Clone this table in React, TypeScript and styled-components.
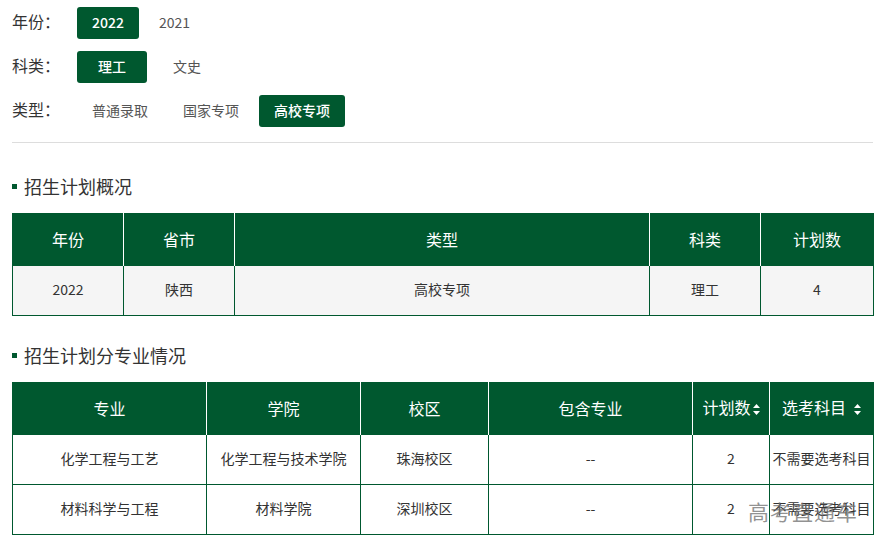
import React from "react";
import styled, { createGlobalStyle } from "styled-components";

const GREEN = "#00582f";

const Global = createGlobalStyle`
  html, body { margin: 0; padding: 0; background: #fff; }
  body { font-family: "Microsoft YaHei", "Noto Sans CJK SC", "Noto Sans", sans-serif; color: #333; }
  * { box-sizing: border-box; }
`;

const Page = styled.div`
  position: relative;
  padding: 7px 13px 0 12px;
  width: 886px;
`;

const Filters = styled.div`
  display: flex;
  flex-direction: column;
  gap: 12px;
`;

const FilterRow = styled.div`
  display: flex;
  align-items: center;
  height: 32px;
`;

const Label = styled.div`
  width: 65px;
  font-size: 16px;
  color: #333;
  line-height: 32px;
  margin-top: -4px;
`;

const Option = styled.button<{ $active?: boolean; $min?: number }>`
  height: 32px;
  padding: 0 15px 2px;
  min-width: ${(p) => (p.$min ? `${p.$min}px` : "0")};
  margin-right: 5px;
  border: none;
  border-radius: 3px;
  font-family: inherit;
  font-size: 14px;
  font-weight: ${(p) => (p.$active ? 500 : 400)};
  background: ${(p) => (p.$active ? GREEN : "transparent")};
  color: ${(p) => (p.$active ? "#fff" : "#555")};
  cursor: pointer;
`;

const Divider = styled.hr`
  border: none;
  border-top: 1px solid #ddd;
  margin: 15px 0 0;
`;

const SectionTitle = styled.h3<{ $top: number }>`
  display: flex;
  align-items: center;
  gap: 7px;
  margin: ${(p) => p.$top}px 0 14px;
  height: 24px;
  padding-bottom: 3px;
  font-size: 18px;
  font-weight: 400;
  color: #333;
  &::before {
    content: "";
    width: 5px;
    height: 5px;
    margin-top: 2px;
    background: ${GREEN};
  }
`;

const Table = styled.table`
  width: 861px;
  border-collapse: collapse;
  table-layout: fixed;
  border: 1px solid ${GREEN};
`;

const Th = styled.th`
  height: 52px;
  background: ${GREEN};
  color: #fff;
  font-size: 16px;
  font-weight: 400;
  text-align: center;
  padding: 0 0 2px;
  border-left: 1px solid #fff;
  white-space: nowrap;
  &:first-child { border-left: 1px solid ${GREEN}; }
`;

const Td = styled.td<{ $bg?: string }>`
  height: 50px;
  background: ${(p) => p.$bg || "#fff"};
  border: 1px solid ${GREEN};
  font-size: 14px;
  text-align: center;
  padding: 0 0 3px;
  color: #333;
  white-space: nowrap;
  overflow: hidden;
`;

const SortWrap = styled.span<{ $gap?: number }>`
  display: inline-block;
  vertical-align: middle;
  margin-left: ${(p) => p.$gap ?? 2}px;
  margin-top: -3px;
`;

const Watermark = styled.div`
  position: absolute;
  left: 748px;
  top: 496px;
  font-size: 21px;
  letter-spacing: 1px;
  color: rgba(110, 110, 110, 0.75);
  pointer-events: none;
`;

const Sort = ({ gap }: { gap?: number }) => (
  <SortWrap $gap={gap}>
    <svg width="7" height="11" viewBox="0 0 7 11">
      <path d="M3.5 0 L7 4 L0 4 Z" fill="#fff" />
      <path d="M0 7 L7 7 L3.5 11 Z" fill="#fff" />
    </svg>
  </SortWrap>
);

export default function App() {
  return (
    <Page>
      <Global />
      <Filters>
        <FilterRow>
          <Label>年份：</Label>
          <Option $active>2022</Option>
          <Option>2021</Option>
        </FilterRow>
        <FilterRow>
          <Label>科类：</Label>
          <Option $active $min={70}>理工</Option>
          <Option $min={70}>文史</Option>
        </FilterRow>
        <FilterRow>
          <Label>类型：</Label>
          <Option>普通录取</Option>
          <Option>国家专项</Option>
          <Option $active>高校专项</Option>
        </FilterRow>
      </Filters>
      <Divider />
      <SectionTitle $top={32}>招生计划概况</SectionTitle>
      <Table>
        <colgroup>
          <col style={{ width: 111 }} />
          <col style={{ width: 111 }} />
          <col style={{ width: 415 }} />
          <col style={{ width: 111 }} />
          <col style={{ width: 113 }} />
        </colgroup>
        <thead>
          <tr>
            <Th>年份</Th>
            <Th>省市</Th>
            <Th>类型</Th>
            <Th>科类</Th>
            <Th>计划数</Th>
          </tr>
        </thead>
        <tbody>
          <tr>
            <Td $bg="#f5f5f5">2022</Td>
            <Td $bg="#f5f5f5">陕西</Td>
            <Td $bg="#f5f5f5">高校专项</Td>
            <Td $bg="#f5f5f5">理工</Td>
            <Td $bg="#f5f5f5">4</Td>
          </tr>
        </tbody>
      </Table>
      <SectionTitle $top={28}>招生计划分专业情况</SectionTitle>
      <Table>
        <colgroup>
          <col style={{ width: 194 }} />
          <col style={{ width: 154 }} />
          <col style={{ width: 128 }} />
          <col style={{ width: 204 }} />
          <col style={{ width: 77 }} />
          <col style={{ width: 104 }} />
        </colgroup>
        <thead>
          <tr>
            <Th>专业</Th>
            <Th>学院</Th>
            <Th>校区</Th>
            <Th>包含专业</Th>
            <Th>
              计划数
              <Sort />
            </Th>
            <Th>
              选考科目
              <Sort gap={8} />
            </Th>
          </tr>
        </thead>
        <tbody>
          <tr>
            <Td>化学工程与工艺</Td>
            <Td>化学工程与技术学院</Td>
            <Td>珠海校区</Td>
            <Td>--</Td>
            <Td>2</Td>
            <Td>不需要选考科目</Td>
          </tr>
          <tr>
            <Td>材料科学与工程</Td>
            <Td>材料学院</Td>
            <Td>深圳校区</Td>
            <Td>--</Td>
            <Td>2</Td>
            <Td>不需要选考科目</Td>
          </tr>
        </tbody>
      </Table>
      <Watermark>高考直通车</Watermark>
    </Page>
  );
}
